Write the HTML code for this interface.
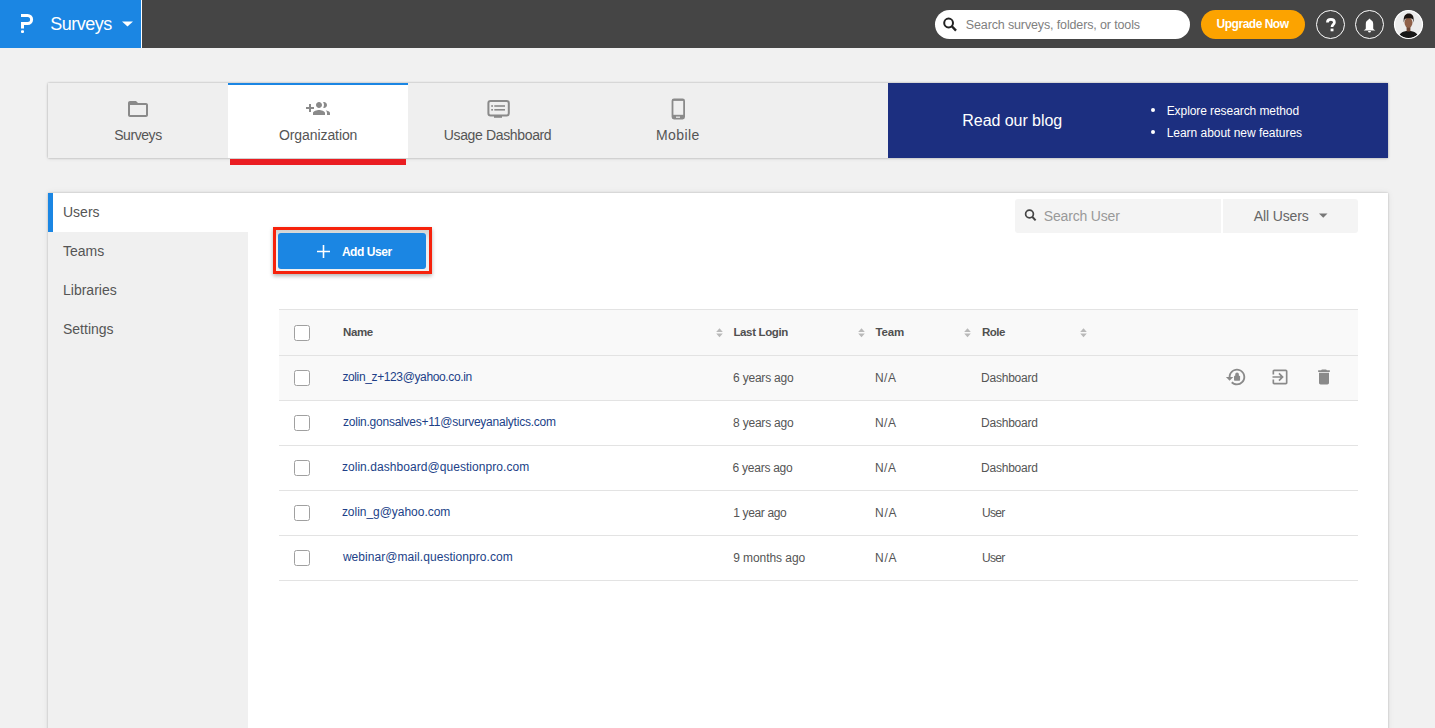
<!DOCTYPE html>
<html><head><meta charset="utf-8">
<style>
*{box-sizing:border-box;margin:0;padding:0}
html,body{width:1435px;height:728px;overflow:hidden}
body{background:#f1f1f1;font-family:"Liberation Sans",sans-serif;position:relative;color:#555}
.a{position:absolute}
.t{position:absolute;white-space:nowrap}
svg{position:absolute;overflow:visible}
/* header */
#hdr{left:0;top:0;width:1435px;height:48px;background:#454545}
#brand{left:0;top:0;width:141px;height:48px;background:#1b86e3}
#sep{left:141px;top:0;width:1px;height:48px;background:#fff}
#gsearch{left:935px;top:10px;width:255px;height:29px;border-radius:15px;background:#fff}
#upg{left:1201px;top:10px;width:104px;height:29px;border-radius:15px;background:#fca300}
.circ{position:absolute;top:10px;width:29px;height:29px;border-radius:50%;border:1.5px solid #fff}
/* tabs */
#tabs{left:48px;top:83px;width:1340px;height:75px;background:#efefef;box-shadow:0 0 2px rgba(0,0,0,.28),0 1px 4px rgba(0,0,0,.08)}
#orgtab{left:228px;top:83px;width:180px;height:75px;background:#fff;border-top:2px solid #1b86e3}
#red{left:230px;top:159px;width:176px;height:6px;background:#ea1d22}
.tl{font-size:14px;line-height:16px;color:#555}
#blog{left:888px;top:83px;width:500px;height:75px;background:#1c2f80}
.bd{width:4px;height:4px;border-radius:50%;background:#fff}
/* panel */
#panel{left:48px;top:193px;width:1340px;height:600px;background:#fff;box-shadow:0 0 2px rgba(0,0,0,.22),0 0 7px rgba(0,0,0,.07)}
#nav{left:48px;top:193px;width:200px;height:600px;background:#f0f0f0}
#navsel{left:48px;top:193px;width:200px;height:39px;background:#fff}
#navbar{left:48px;top:193px;width:5px;height:39px;background:#1b86e3}
.nv{font-size:14px;line-height:16px;color:#555}
#addout{left:273px;top:227px;width:159px;height:47px;border:3px solid #f6220c;background:linear-gradient(#d2d2d2,#ececec 25%,#f0f0f0);box-shadow:0 2px 4px rgba(0,0,0,.3)}
#addbtn{left:278px;top:233px;width:148px;height:36px;background:#1b86e3;border-radius:3px}
#usearch{left:1015px;top:199px;width:206px;height:34px;background:#f4f4f4;border-radius:3px 0 0 3px}
#allusers{left:1223px;top:199px;width:135px;height:34px;background:#f4f4f4;border-radius:0 3px 3px 0}
.hl{left:279px;width:1079px;height:1px;background:#e3e3e3}
.rowbg{left:279px;width:1079px;height:45px;background:#f9f9f9}
.cb{position:absolute;left:294px;width:16px;height:16px;border:1.5px solid #a0a0a0;border-radius:2.5px;background:#fff}
.hd{font-size:11.5px;font-weight:bold;color:#505050;line-height:14px}
.td{font-size:12px;color:#555;line-height:14px}
.lk{color:#213f88}
</style></head><body>
<div id="hdr" class="a"></div>
<div id="brand" class="a"></div><div id="sep" class="a"></div>
<svg style="left:0;top:0" width="48" height="48"><path d="M21 15.5H27.6A4 4 0 0 1 27.6 23.5H22.5V28.5" fill="none" stroke="#fff" stroke-width="3"/><rect x="21" y="30.3" width="3" height="2.7" rx="1" fill="#fff"/></svg>
<span id="t_brand" class="t" style="left:50.20px;top:14.00px;font-size:18px;line-height:20px;color:#fff;letter-spacing:-0.483px">Surveys</span>
<svg style="left:122px;top:21px" width="11" height="6"><path d="M0 0.5H11L5.5 5.5z" fill="#fff"/></svg>
<div id="gsearch" class="a"></div>
<svg style="left:940px;top:15px" width="20" height="20"><circle cx="8.6" cy="8" r="4.4" fill="none" stroke="#222" stroke-width="2"/><path d="M11.6 11L16 15.6" stroke="#222" stroke-width="2.4"/></svg>
<span id="t_gsearch" class="t" style="left:965.80px;top:18.00px;font-size:12.5px;line-height:15px;color:#808080;letter-spacing:-0.134px">Search surveys, folders, or tools</span>
<div id="upg" class="a"></div>
<span id="t_upg" class="t" style="left:1216.60px;top:17.30px;font-size:12px;line-height:15px;color:#fff;font-weight:bold;letter-spacing:-0.490px">Upgrade Now</span>
<div class="circ" style="left:1316px"></div>
<svg style="left:1316px;top:10px" width="29" height="29"><path d="M11.4 12.4C11.4 10.2 12.8 9.3 14.9 9.3S18.4 10.3 18.4 12.2C18.4 14.5 16 14.6 16 17" fill="none" stroke="#fff" stroke-width="2.7"/><rect x="14.6" y="18.6" width="2.9" height="2.7" fill="#fff"/></svg>
<div class="circ" style="left:1355px"></div>
<svg style="left:1355px;top:10px" width="29" height="29"><path d="M14.5 8.7C13.9 8.7 13.5 9.1 13.5 9.7C11.7 10.3 10.8 11.9 10.8 14V18.2C10.8 19.2 9.6 19.8 8.6 20.6H20.4C19.4 19.8 18.2 19.2 18.2 18.2V14C18.2 11.9 17.3 10.3 15.5 9.7C15.5 9.1 15.1 8.7 14.5 8.7Z" fill="#fff"/><path d="M13 20.9A1.5 1.5 0 0 0 16 20.9Z" fill="#fff"/></svg>
<svg style="left:1394px;top:10px" width="29" height="29"><defs><clipPath id="cp"><circle cx="14.5" cy="14.5" r="13.7"/></clipPath></defs><circle cx="14.5" cy="14.5" r="14" fill="#fff"/><g clip-path="url(#cp)"><rect width="29" height="29" fill="#ececec"/><path d="M4 29C5 23.5 8 21 14.5 21S24 23.5 25 29Z" fill="#171717"/><rect x="12.6" y="16.5" width="3.8" height="5" fill="#6b4636"/><ellipse cx="14.5" cy="12.6" rx="4" ry="5.2" fill="#8f6048"/><path d="M9.8 12.5C9 6 11.5 3.4 14.8 3.4S20.6 6 19.4 12.5L18.8 9.2C17 8 12.5 8 10.6 9.2Z" fill="#1c1410"/></g><circle cx="14.5" cy="14.5" r="14" fill="none" stroke="#fff" stroke-width="1.2"/></svg>

<div id="tabs" class="a"></div>
<div id="orgtab" class="a"></div>
<div id="red" class="a"></div>
<svg style="left:126px;top:97px" width="24" height="24" viewBox="0 0 24 24"><path d="M20 6h-8l-2-2H4c-1.1 0-1.99.9-1.99 2L2 18c0 1.1.9 2 2 2h16c1.1 0 2-.9 2-2V8c0-1.1-.9-2-2-2zm0 12H4V8h16v10z" fill="#8a8a8a"/></svg>
<span id="t_tab1" class="t tl" style="left:114.20px;top:127px;letter-spacing:-0.433px">Surveys</span>
<svg style="left:306px;top:97px" width="24" height="24" viewBox="0 0 24 24"><path d="M8 10H5V7H3v3H0v2h3v3h2v-3h3v-2zm10 1c1.66 0 2.99-1.34 2.99-3S19.66 5 18 5c-.32 0-.63.05-.91.14.57.81.9 1.79.9 2.86s-.34 2.04-.9 2.86c.28.09.59.14.91.14zm-5 0c1.66 0 2.99-1.34 2.99-3S14.66 5 13 5c-1.66 0-3 1.34-3 3s1.34 3 3 3zm6.62 2.16c.83.73 1.38 1.660 1.38 2.84v2h3v-2c0-1.54-2.37-2.49-4.38-2.84zM13 13c-2 0-6 1-6 3v2h12v-2c0-2-4-3-6-3z" fill="#8a8a8a"/></svg>
<span id="t_tab2" class="t tl" style="left:279.00px;top:127px;letter-spacing:-0.091px">Organization</span>
<svg style="left:486px;top:98px" width="24" height="24"><rect x="2.4" y="2.9" width="20.4" height="14.6" rx="2.2" fill="none" stroke="#8a8a8a" stroke-width="2"/><rect x="8" y="17.6" width="8" height="2.2" fill="#8a8a8a"/><rect x="5.2" y="7.2" width="1.8" height="1.6" fill="#8a8a8a"/><rect x="8.3" y="7.2" width="10.7" height="1.6" fill="#8a8a8a"/><rect x="5.2" y="11" width="1.8" height="1.6" fill="#8a8a8a"/><rect x="8.3" y="11" width="10.7" height="1.6" fill="#8a8a8a"/></svg>
<span id="t_tab3" class="t tl" style="left:443.75px;top:127px;letter-spacing:-0.353px">Usage Dashboard</span>
<svg style="left:666px;top:96px" width="24" height="26"><rect x="5.6" y="2.4" width="13.4" height="21" rx="2.4" fill="#8a8a8a"/><rect x="7.4" y="4.9" width="9.8" height="13.9" fill="#efefef"/><rect x="10" y="20.6" width="4" height="1.2" fill="#efefef"/></svg>
<span id="t_tab4" class="t tl" style="left:656.00px;top:127px;letter-spacing:0.400px">Mobile</span>

<div id="blog" class="a"></div>
<span id="t_blog" class="t" style="left:962.30px;top:111.80px;font-size:16px;line-height:18px;color:#fff;letter-spacing:-0.051px">Read our blog</span>
<div class="a bd" style="left:1151px;top:108px"></div>
<div class="a bd" style="left:1151px;top:129.5px"></div>
<span id="t_b1" class="t" style="left:1166.70px;top:104.30px;font-size:12px;line-height:14px;color:#fff;letter-spacing:-0.076px">Explore research method</span>
<span id="t_b2" class="t" style="left:1166.70px;top:125.80px;font-size:12px;line-height:14px;color:#fff;letter-spacing:-0.031px">Learn about new features</span>

<div id="panel" class="a"></div>
<div id="nav" class="a"></div>
<div id="navsel" class="a"></div>
<div id="navbar" class="a"></div>
<span class="t nv" style="left:63px;top:204px">Users</span>
<span class="t nv" style="left:63px;top:243px">Teams</span>
<span class="t nv" style="left:63px;top:282px">Libraries</span>
<span class="t nv" style="left:63px;top:321px">Settings</span>

<div id="addout" class="a"></div>
<div id="addbtn" class="a"></div>
<svg style="left:317px;top:245px" width="13" height="13"><path d="M6.5 0V13M0 6.5H13" stroke="#fff" stroke-width="1.6"/></svg>
<span id="t_add" class="t" style="left:341.90px;top:245.00px;font-size:12px;line-height:14px;color:#fff;font-weight:bold;letter-spacing:-0.442px">Add User</span>

<div id="usearch" class="a"></div>
<svg style="left:1020px;top:205px" width="20" height="20"><circle cx="9.5" cy="9" r="3.9" fill="none" stroke="#444" stroke-width="1.7"/><path d="M12.2 11.8L15.6 15.4" stroke="#444" stroke-width="2"/></svg>
<span id="t_us" class="t" style="left:1043.80px;top:208.00px;font-size:14px;line-height:16px;color:#999;letter-spacing:-0.180px">Search User</span>
<div id="allusers" class="a"></div>
<span id="t_au" class="t" style="left:1253.80px;top:208.10px;font-size:14px;line-height:16px;color:#666;letter-spacing:-0.125px">All Users</span>
<svg style="left:1319px;top:213px" width="9" height="5"><path d="M0 0.5H8.5L4.25 4.8z" fill="#777"/></svg>

<!-- table -->
<div class="a" style="left:279px;top:310px;width:1079px;height:45px;background:#f9f9f9"></div>
<div class="a hl" style="top:309px"></div>
<div class="a rowbg" style="top:356px"></div>
<div class="a hl" style="top:355px"></div>
<div class="a hl" style="top:400px"></div>
<div class="a hl" style="top:445px"></div>
<div class="a hl" style="top:490px"></div>
<div class="a hl" style="top:535px"></div>
<div class="a hl" style="top:580px"></div>
<div class="cb" style="top:325px"></div>
<span id="h_name" class="t hd" style="left:343.00px;top:324.60px;letter-spacing:-0.367px">Name</span>
<span id="h_last" class="t hd" style="left:733.40px;top:324.60px;letter-spacing:-0.355px">Last Login</span>
<span id="h_team" class="t hd" style="left:875.60px;top:324.60px;letter-spacing:-0.200px">Team</span>
<span id="h_role" class="t hd" style="left:982.00px;top:324.60px;letter-spacing:-0.499px">Role</span>
<svg style="left:716px;top:328px" width="7" height="10"><path d="M3.5 0.3L6.8 3.9H0.2z M0.2 5.6H6.8L3.5 9.2z" fill="#b9b9b9"/></svg>
<svg style="left:858px;top:328px" width="7" height="10"><path d="M3.5 0.3L6.8 3.9H0.2z M0.2 5.6H6.8L3.5 9.2z" fill="#b9b9b9"/></svg>
<svg style="left:964px;top:328px" width="7" height="10"><path d="M3.5 0.3L6.8 3.9H0.2z M0.2 5.6H6.8L3.5 9.2z" fill="#b9b9b9"/></svg>
<svg style="left:1080px;top:328px" width="7" height="10"><path d="M3.5 0.3L6.8 3.9H0.2z M0.2 5.6H6.8L3.5 9.2z" fill="#b9b9b9"/></svg>
<div class="cb" style="top:370px"></div>
<span id="r0_e" class="t td lk" style="left:342.40px;top:370.00px;letter-spacing:-0.373px">zolin_z+123@yahoo.co.in</span>
<span id="r0_l" class="t td" style="left:733.10px;top:371.00px;letter-spacing:-0.220px">6 years ago</span>
<span id="r0_t" class="t td" style="left:875.00px;top:371.00px;letter-spacing:0.450px">N/A</span>
<span id="r0_r" class="t td" style="left:981.00px;top:371.00px;letter-spacing:-0.214px">Dashboard</span>
<div class="cb" style="top:415px"></div>
<span id="r1_e" class="t td lk" style="left:343.00px;top:415.00px;letter-spacing:-0.237px">zolin.gonsalves+11@surveyanalytics.com</span>
<span id="r1_l" class="t td" style="left:733.10px;top:416.00px;letter-spacing:-0.220px">8 years ago</span>
<span id="r1_t" class="t td" style="left:875.00px;top:416.00px;letter-spacing:0.450px">N/A</span>
<span id="r1_r" class="t td" style="left:981.00px;top:416.00px;letter-spacing:-0.214px">Dashboard</span>
<div class="cb" style="top:460px"></div>
<span id="r2_e" class="t td lk" style="left:341.90px;top:460.00px;letter-spacing:0.057px">zolin.dashboard@questionpro.com</span>
<span id="r2_l" class="t td" style="left:732.60px;top:461.00px;letter-spacing:-0.260px">6 years ago</span>
<span id="r2_t" class="t td" style="left:875.00px;top:461.00px;letter-spacing:0.450px">N/A</span>
<span id="r2_r" class="t td" style="left:981.00px;top:461.00px;letter-spacing:-0.214px">Dashboard</span>
<div class="cb" style="top:505px"></div>
<span id="r3_e" class="t td lk" style="left:341.90px;top:505.00px;letter-spacing:-0.032px">zolin_g@yahoo.com</span>
<span id="r3_l" class="t td" style="left:733.20px;top:506.00px;letter-spacing:-0.345px">1 year ago</span>
<span id="r3_t" class="t td" style="left:875.00px;top:506.00px;letter-spacing:0.750px">N/A</span>
<span id="r3_r" class="t td" style="left:981.90px;top:506.00px;letter-spacing:-0.666px">User</span>
<div class="cb" style="top:550px"></div>
<span id="r4_e" class="t td lk" style="left:342.90px;top:550.00px;letter-spacing:0.058px">webinar@mail.questionpro.com</span>
<span id="r4_l" class="t td" style="left:733.20px;top:551.00px;letter-spacing:-0.064px">9 months ago</span>
<span id="r4_t" class="t td" style="left:875.00px;top:551.00px;letter-spacing:0.750px">N/A</span>
<span id="r4_r" class="t td" style="left:981.90px;top:551.00px;letter-spacing:-0.666px">User</span>
<svg style="left:1225.3px;top:366px" width="22.08" height="22.08" viewBox="0 0 24 24"><path d="M13 3c-4.97 0-9 4.03-9 9H1l4 3.99L9 12H6c0-3.87 3.13-7 7-7s7 3.13 7 7-3.13 7-7 7c-1.93 0-3.68-.79-4.94-2.06l-1.42 1.42C8.27 19.99 10.51 21 13 21c4.97 0 9-4.03 9-9s-4.03-9-9-9z" fill="#8a8a8a"/><rect x="9.8" y="10.5" width="6.6" height="5.4" rx=".8" fill="#8a8a8a"/><path d="M11.1 10.8V9.4C11.1 8 12 7 13.1 7S15.1 8 15.1 9.4V10.8Z" fill="#8a8a8a"/></svg>
<svg style="left:1270px;top:367px" width="20" height="20" viewBox="0 0 24 24"><path d="M10.09 15.59L11.5 17l5-5-5-5-1.41 1.41L12.67 11H3v2h9.67l-2.58 2.59zM19 3H5c-1.11 0-2 .9-2 2v4h2V5h14v14H5v-4H3v4c0 1.1.89 2 2 2h14c1.1 0 2-.9 2-2V5c0-1.1-.9-2-2-2z" fill="#8a8a8a"/></svg>
<svg style="left:1314.4px;top:367px" width="20" height="20" viewBox="0 0 24 24"><path d="M6 19c0 1.1.9 2 2 2h8c1.1 0 2-.9 2-2V7H6v12zM19 4h-3.5l-1-1h-5l-1 1H5v2h14V4z" fill="#8a8a8a"/></svg>
</body></html>
